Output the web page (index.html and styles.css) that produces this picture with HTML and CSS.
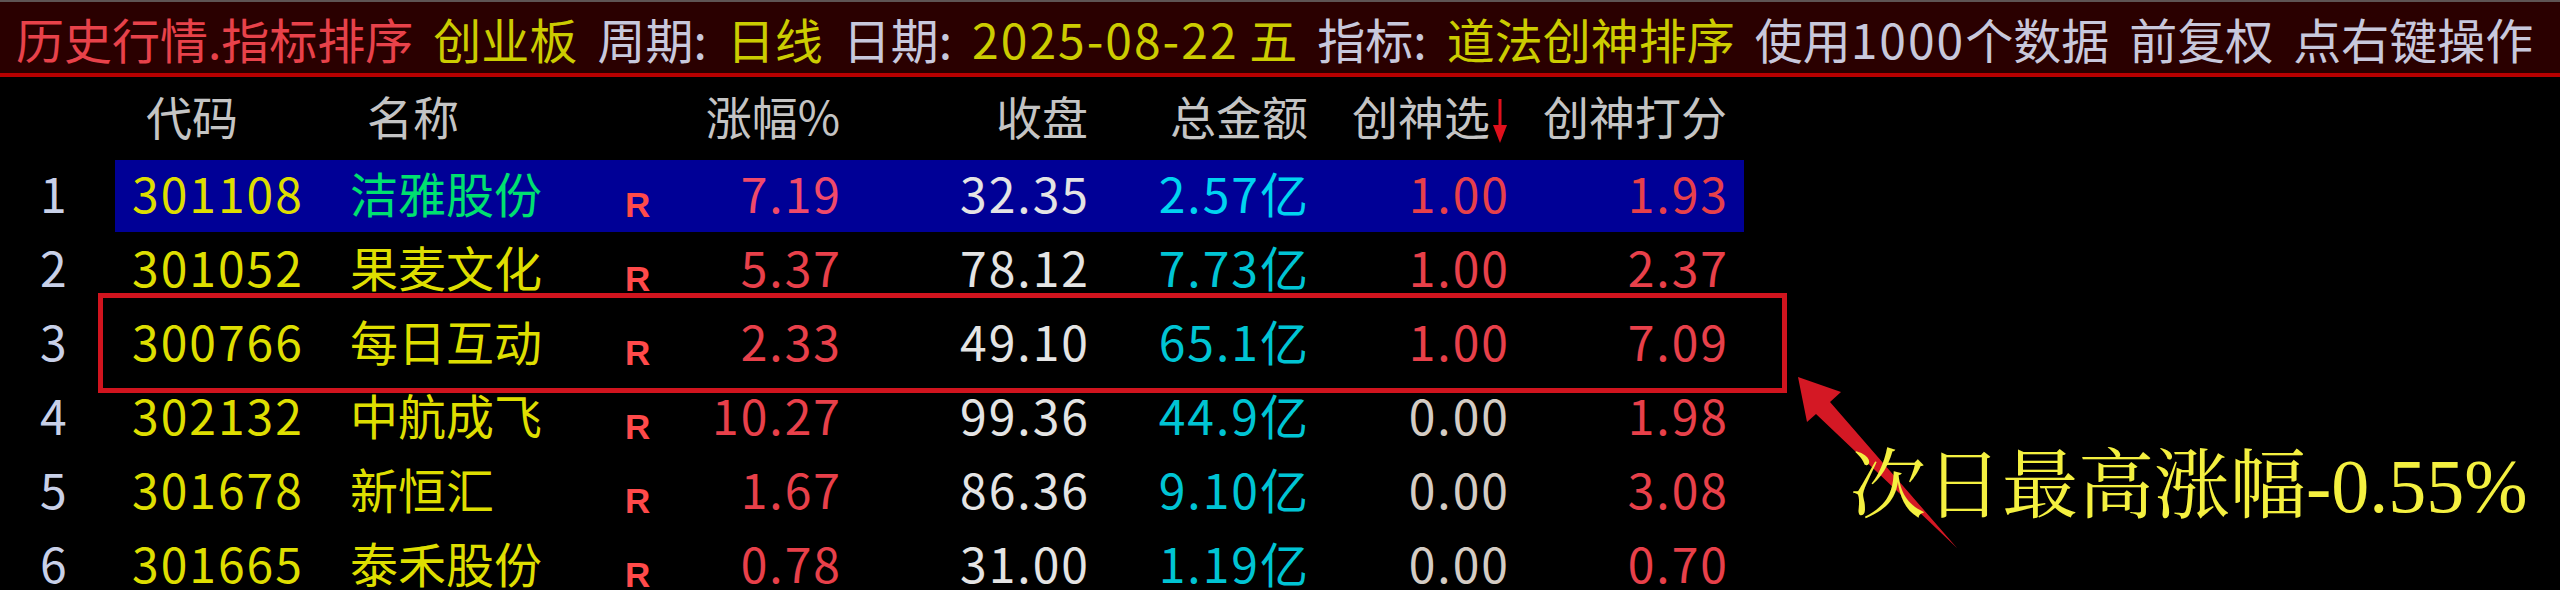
FILE: index.html
```html
<!DOCTYPE html>
<html lang="zh-CN">
<head>
<meta charset="utf-8">
<title>历史行情.指标排序</title>
<link rel="stylesheet" href="styles.css">
</head>
<body>
<div class="screen">
  <div class="titlebar">
    <span class="t-red">历史行情.指标排序</span>
    <span class="t-yel">创业板</span>
    <span class="t-lab">周期:</span>
    <span class="t-yel">日线</span>
    <span class="t-lab">日期:</span>
    <span class="t-yel"><span class="n">2025-08-22</span> 五</span>
    <span class="t-lab">指标:</span>
    <span class="t-yel">道法创神排序</span>
    <span class="t-lab">使用<span class="n">1000</span>个数据</span>
    <span class="t-lab">前复权</span>
    <span class="t-lab">点右键操作</span>
  </div>

  <div class="table">
    <div class="row head">
      <div class="c idx"></div>
      <div class="c code">代码</div>
      <div class="c name">名称</div>
      <div class="c flag"></div>
      <div class="c num pct">涨幅%</div>
      <div class="c num close">收盘</div>
      <div class="c num amt">总金额</div>
      <div class="c num sel">创神选<svg class="sort" width="16" height="48" viewBox="0 0 16 48"><path d="M8 2 V34" stroke="#e0101c" stroke-width="3"/><path d="M1 28 L15 28 L8 46 Z" fill="#e0101c"/></svg></div>
      <div class="c num score">创神打分</div>
    </div>

    <div class="row active">
      <div class="c idx">1</div>
      <div class="c code">301108</div>
      <div class="c name green">洁雅股份</div>
      <div class="c flag"><span class="r">R</span></div>
      <div class="c num pct red pink">7.19</div>
      <div class="c num close">32.35</div>
      <div class="c num amt">2.57亿</div>
      <div class="c num sel red">1.00</div>
      <div class="c num score red">1.93</div>
    </div>

    <div class="row">
      <div class="c idx">2</div>
      <div class="c code">301052</div>
      <div class="c name">果麦文化</div>
      <div class="c flag"><span class="r">R</span></div>
      <div class="c num pct red">5.37</div>
      <div class="c num close">78.12</div>
      <div class="c num amt">7.73亿</div>
      <div class="c num sel red">1.00</div>
      <div class="c num score red">2.37</div>
    </div>

    <div class="row">
      <div class="c idx">3</div>
      <div class="c code">300766</div>
      <div class="c name">每日互动</div>
      <div class="c flag"><span class="r">R</span></div>
      <div class="c num pct red">2.33</div>
      <div class="c num close">49.10</div>
      <div class="c num amt">65.1亿</div>
      <div class="c num sel red">1.00</div>
      <div class="c num score red">7.09</div>
    </div>

    <div class="row">
      <div class="c idx">4</div>
      <div class="c code">302132</div>
      <div class="c name">中航成飞</div>
      <div class="c flag"><span class="r">R</span></div>
      <div class="c num pct red">10.27</div>
      <div class="c num close">99.36</div>
      <div class="c num amt">44.9亿</div>
      <div class="c num sel zero">0.00</div>
      <div class="c num score red">1.98</div>
    </div>

    <div class="row">
      <div class="c idx">5</div>
      <div class="c code">301678</div>
      <div class="c name">新恒汇</div>
      <div class="c flag"><span class="r">R</span></div>
      <div class="c num pct red">1.67</div>
      <div class="c num close">86.36</div>
      <div class="c num amt">9.10亿</div>
      <div class="c num sel zero">0.00</div>
      <div class="c num score red">3.08</div>
    </div>

    <div class="row">
      <div class="c idx">6</div>
      <div class="c code">301665</div>
      <div class="c name">泰禾股份</div>
      <div class="c flag"><span class="r">R</span></div>
      <div class="c num pct red">0.78</div>
      <div class="c num close">31.00</div>
      <div class="c num amt">1.19亿</div>
      <div class="c num sel zero">0.00</div>
      <div class="c num score red">0.70</div>
    </div>
  </div>

  <div class="mark-box"></div>
  <svg class="mark-arrow" width="200" height="200" viewBox="1780 360 200 200">
    <polygon points="1798,377 1841,392 1830,402 1957,548 1816,414 1807,422" fill="#d41824"/>
  </svg>
  <div class="mark-text">次日最高涨幅-0.55%</div>
</div>
</body>
</html>
```

FILE: styles.css
```css
html, body {
  margin: 0;
  padding: 0;
  background: #000;
}

.screen {
  position: relative;
  width: 2560px;
  height: 590px;
  overflow: hidden;
  background: #000;
  font-family: "Noto Sans CJK SC", "Noto Sans", sans-serif;
}

.titlebar {
  box-sizing: border-box;
  height: 77px;
  border-top: 2px solid #5e5454;
  border-bottom: 4px solid #b80000;
  background: #2a0000;
  display: flex;
  align-items: center;
  gap: 20px;
  padding-left: 16px;
  font-size: 48px;
  line-height: 1;
  white-space: nowrap;
}

.titlebar .n { letter-spacing: 2px; }

.t-red { color: #e8424a; }
.t-yel { color: #cccc00; }
.t-lab { color: #c8c8dc; }

.table {
  font-size: 48px;
  white-space: nowrap;
}

.row {
  display: grid;
  grid-template-columns: 115px 235px 273px 57px 160px 248px 220px 200px 236px;
  width: 1744px;
  height: 74px;
  line-height: 65px;
  letter-spacing: 2px;
}

.row.head {
  height: 83px;
  line-height: 77px;
  font-size: 46px;
  letter-spacing: 0;
  color: #c4c4c4;
}

.row.active {
  background: linear-gradient(#000, #000) left / 115px 100% no-repeat, #000096;
  box-shadow: inset 0 -2px 0 #000;
}

.c { overflow: visible; }

.idx {
  padding-left: 40px;
  color: #c8d0e8;
}

.code {
  padding-left: 17px;
  color: #dede00;
}

.head .code { padding-left: 31px; color: #c4c4c4; }
.head .name { padding-left: 17px; color: #c4c4c4; }

.name { color: #dede00; letter-spacing: 0; }
.name.green { color: #00e070; }

.flag .r {
  font-family: "Liberation Sans", sans-serif;
  font-weight: bold;
  font-size: 35px;
  letter-spacing: 0;
  color: #ff4a4a;
  padding-left: 2px;
  vertical-align: -4px;
}

.num { text-align: right; margin-right: -2px; }
.head .num { margin-right: 0; }
.score { padding-right: 17px; }

.close { color: #e4e4e4; }
.amt { color: #00c4d4; }
.active .amt { color: #00d4f0; }
.red { color: #e8404a; }
.pink { color: #f04a6a; }
.zero { color: #d4ccc4; }

.head .num { color: #c4c4c4; }

.sort {
  vertical-align: -10px;
  margin-left: 2px;
}

.mark-box {
  position: absolute;
  left: 98px;
  top: 293px;
  width: 1689px;
  height: 100px;
  box-sizing: border-box;
  border: 5px solid #d0141e;
}

.mark-arrow {
  position: absolute;
  left: 1780px;
  top: 360px;
}

.mark-text {
  position: absolute;
  left: 1850px;
  top: 448px;
  font-family: "Liberation Serif", "Noto Serif CJK SC", "Noto Sans CJK SC", serif;
  font-size: 76px;
  line-height: 1;
  color: #f4f040;
  white-space: nowrap;
}
```
